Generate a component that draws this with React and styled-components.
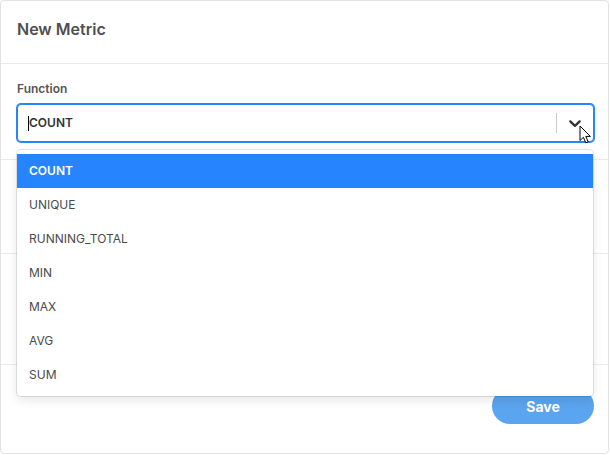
import React from 'react'
import styled, { createGlobalStyle } from 'styled-components'

const GlobalStyle = createGlobalStyle`
  html, body {
    margin: 0;
    padding: 0;
    background: #fff;
    font-family: Inter, "Noto Sans", "Liberation Sans", sans-serif;
  }
`

const FUNCTIONS = ['COUNT', 'UNIQUE', 'RUNNING_TOTAL', 'MIN', 'MAX', 'AVG', 'SUM']

const Chevron = () => (
  <svg width="20" height="20" viewBox="0 0 20 20" aria-hidden="true">
    <path
      fill="currentColor"
      d="M4.516 7.548c0.436-0.446 1.043-0.481 1.576 0l3.908 3.747 3.908-3.747c0.533-0.481 1.141-0.446 1.574 0 0.436 0.445 0.408 1.197 0 1.615-0.406 0.418-4.695 4.502-4.695 4.502-0.217 0.223-0.502 0.335-0.787 0.335s-0.57-0.112-0.789-0.335c0 0-4.287-4.084-4.695-4.502s-0.436-1.17 0-1.615z"
    />
  </svg>
)

const Pointer = () => (
  <svg width="13" height="19" viewBox="0 0 13 19" aria-hidden="true">
    <path
      d="M1 1 L1 15.5 L4.4 12.3 L6.8 17.8 L9.2 16.8 L6.8 11.4 L11.4 11.4 Z"
      fill="#fff"
      stroke="#000"
      strokeWidth="1"
      strokeLinejoin="round"
    />
  </svg>
)

function Select({ value, options, open }) {
  return (
    <SelectBox>
      <Control focused={open}>
        <ValueArea>
          <Caret />
          <Value>{value}</Value>
        </ValueArea>
        <Separator />
        <Indicator focused={open}>
          <Chevron />
        </Indicator>
        {open && (
          <MouseCursor>
            <Pointer />
          </MouseCursor>
        )}
      </Control>
      {open && (
        <Menu>
          {options.map(o => (
            <Option key={o} selected={o === value}>
              {o}
            </Option>
          ))}
        </Menu>
      )}
    </SelectBox>
  )
}

export default function App() {
  return (
    <>
      <GlobalStyle />
      <Card>
        <Header>
          <Title>New Metric</Title>
        </Header>

        <Section size="96px">
          <Label>Function</Label>
          <Select value="COUNT" options={FUNCTIONS} open />
        </Section>

        {/* rows hidden behind the open menu */}
        <Section size="94px" />
        <Section size="111px" />

        <Footer>
          <SaveButton>Save</SaveButton>
        </Footer>
      </Card>
    </>
  )
}

const Card = styled.div`
  box-sizing: border-box;
  width: 609px;
  height: 454px;
  border: 1px solid #e2e2e2;
  border-radius: 4px;
  background: #fff;
  display: flex;
  flex-direction: column;
`

const Header = styled.div`
  flex: none;
  height: 63px;
  box-sizing: border-box;
  padding: 17px 14px 0 16px;
  border-bottom: 1px solid #ebebeb;
`

const Title = styled.h2`
  margin: 0;
  font-size: 16px;
  line-height: 22px;
  font-weight: 600;
  color: #4f4f4f;
`

const Section = styled.div`
  flex: none;
  position: relative;
  box-sizing: border-box;
  height: ${p => p.size || 'auto'};
  padding: 17px 14px 0 16px;
  border-bottom: 1px solid #ebebeb;
  display: flex;
  flex-direction: column;
  gap: 7px;
`

const Label = styled.label`
  font-size: 12px;
  line-height: 16px;
  font-weight: 600;
  color: #555;
`

const SelectBox = styled.div`
  position: relative;
  z-index: 2;
`

const Control = styled.div`
  position: relative;
  box-sizing: border-box;
  height: 38px;
  display: flex;
  align-items: center;
  border: 1px solid ${p => (p.focused ? '#2684ff' : '#ccc')};
  box-shadow: ${p => (p.focused ? '0 0 0 1px #2684ff' : 'none')};
  border-radius: 4px;
  background: #fff;
`

const ValueArea = styled.div`
  flex: 1;
  display: flex;
  align-items: center;
  padding: 2px 10px;
`

const Caret = styled.span`
  width: 1px;
  height: 15px;
  background: #000;
`

const Value = styled.span`
  font-size: 12px;
  font-weight: 600;
  color: #333;
  line-height: 18px;
`

const Separator = styled.span`
  align-self: stretch;
  width: 1px;
  margin: 8px 0;
  background: #ccc;
`

const Indicator = styled.div`
  display: flex;
  padding: 8px;
  color: ${p => (p.focused ? '#333' : '#999')};
`

const MouseCursor = styled.div`
  position: absolute;
  left: 561px;
  top: 20px;
  display: flex;
  pointer-events: none;
`

const Menu = styled.div`
  position: absolute;
  top: calc(100% + 8px);
  left: 0;
  right: 1px;
  padding: 4px 0;
  background: #fff;
  border-radius: 4px;
  box-shadow: 0 0 0 1px rgba(0, 0, 0, 0.1), 0 4px 11px rgba(0, 0, 0, 0.1);
`

const Option = styled.div`
  padding: 8px 12px;
  font-size: 12px;
  line-height: 18px;
  font-weight: ${p => (p.selected ? 600 : 400)};
  color: ${p => (p.selected ? '#fff' : '#4a4a4a')};
  background: ${p => (p.selected ? '#2684ff' : 'transparent')};
`

const Footer = styled.div`
  flex: 1;
  display: flex;
  justify-content: flex-end;
  align-items: flex-start;
  padding: 23px 14px 0 16px;
`

const SaveButton = styled.button`
  width: 102px;
  height: 36px;
  border: none;
  border-radius: 18px;
  background: #5ba4ef;
  color: #fff;
  font-family: inherit;
  font-size: 14px;
  font-weight: 700;
  cursor: pointer;
`
